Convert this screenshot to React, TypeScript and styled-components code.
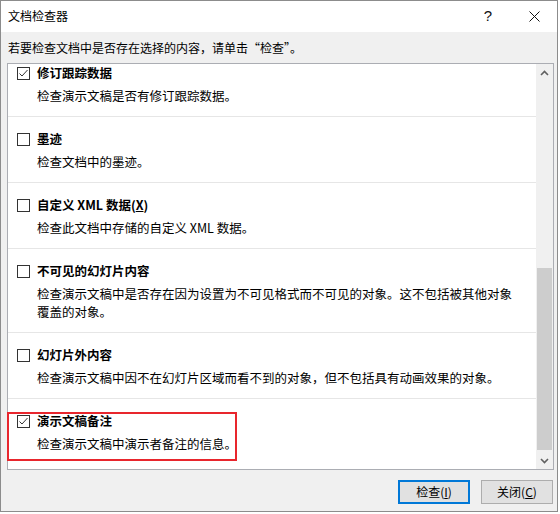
import React from 'react'
import styled, { createGlobalStyle } from 'styled-components'

const GlobalStyle = createGlobalStyle`
  html, body {
    margin: 0;
    padding: 0;
    background: #ffffff;
  }
  body {
    font-family: "Noto Sans CJK SC", "Noto Sans", sans-serif;
    font-size: 12px;
    color: #000;
  }
`

type Item = {
  title: React.ReactNode
  desc: string
  checked?: boolean
  highlighted?: boolean
}

const items: Array<Item> = [
  { title: '修订跟踪数据', desc: '检查演示文稿是否有修订跟踪数据。', checked: true },
  { title: '墨迹', desc: '检查文档中的墨迹。' },
  {
    title: (
      <>
        自定义 XML 数据(<u>X</u>)
      </>
    ),
    desc: '检查此文档中存储的自定义 XML 数据。',
  },
  {
    title: '不可见的幻灯片内容',
    desc: '检查演示文稿中是否存在因为设置为不可见格式而不可见的对象。这不包括被其他对象覆盖的对象。',
  },
  {
    title: '幻灯片外内容',
    desc: '检查演示文稿中因不在幻灯片区域而看不到的对象，但不包括具有动画效果的对象。',
  },
  {
    title: '演示文稿备注',
    desc: '检查演示文稿中演示者备注的信息。',
    checked: true,
    highlighted: true,
  },
]

const CheckBox: React.FunctionComponent<{ checked?: boolean }> = ({ checked }) => (
  <svg width="13" height="13" viewBox="0 0 13 13">
    <rect x="0.5" y="0.5" width="12" height="12" fill="#fff" stroke="#333" />
    {checked && (
      <path d="M2.5 6.5 L5 9 L10.5 3" fill="none" stroke="#333" strokeWidth="1" />
    )}
  </svg>
)

const Chevron: React.FunctionComponent<{ up?: boolean }> = ({ up }) => (
  <svg width="9" height="6" viewBox="0 0 9 6">
    <path
      d={up ? 'M1 5 L4.5 1.5 L8 5' : 'M1 1 L4.5 4.5 L8 1'}
      fill="none"
      stroke="#606060"
      strokeWidth="1.6"
    />
  </svg>
)

export default function App() {
  return (
    <>
      <GlobalStyle />
      <Window>
        <TitleBar>
          <Title>文档检查器</Title>
          <TitleButton>
            <HelpGlyph>?</HelpGlyph>
          </TitleButton>
          <TitleButton>
            <svg width="11" height="11" viewBox="0 0 11 11">
              <path d="M0.5 0.5 L10.5 10.5 M10.5 0.5 L0.5 10.5" stroke="#111" strokeWidth="1" />
            </svg>
          </TitleButton>
        </TitleBar>
        <Body>
          <Instruction>若要检查文档中是否存在选择的内容，请单击“检查”。</Instruction>
          <ListBox>
            <ListViewport>
              <ListContent>
                {items.map((item, i) => (
                  <ListItem key={i} last={i === items.length - 1}>
                    <ItemHeader>
                      <CheckBox checked={item.checked} />
                      <ItemTitle>{item.title}</ItemTitle>
                    </ItemHeader>
                    <ItemDesc>{item.desc}</ItemDesc>
                    {item.highlighted && <Highlight />}
                  </ListItem>
                ))}
              </ListContent>
            </ListViewport>
            <ScrollBar>
              <ScrollArrow>
                <Chevron up />
              </ScrollArrow>
              <ScrollTrack>
                <ScrollThumb />
              </ScrollTrack>
              <ScrollArrow>
                <Chevron />
              </ScrollArrow>
            </ScrollBar>
          </ListBox>
          <Footer>
            <DialogButton primary>
              检查(<u>I</u>)
            </DialogButton>
            <DialogButton>
              关闭(<u>C</u>)
            </DialogButton>
          </Footer>
        </Body>
      </Window>
    </>
  )
}

const Window = styled.div`
  width: 558px;
  height: 512px;
  box-sizing: border-box;
  border: 1px solid #8c8c8c;
  background: #f0f0f0;
  display: flex;
  flex-direction: column;
`

const TitleBar = styled.div`
  height: 31px;
  background: #ffffff;
  display: flex;
  flex-direction: row;
  align-items: center;
  padding-left: 7px;
`

const Title = styled.div`
  flex: 1;
  font-size: 12px;
  line-height: 16px;
  margin-top: -2px;
`

const TitleButton = styled.div`
  width: 46px;
  height: 31px;
  display: flex;
  align-items: center;
  justify-content: center;
`

const HelpGlyph = styled.span`
  font-family: "Liberation Sans", sans-serif;
  font-size: 15px;
  color: #111;
  margin-top: -2px;
`

const Body = styled.div`
  flex: 1;
  display: flex;
  flex-direction: column;
  padding: 0 3px 0 6px;
`

const Instruction = styled.div`
  height: 31px;
  line-height: 31px;
  padding-left: 1px;
  font-size: 12px;
`

const ListBox = styled.div`
  height: 407px;
  box-sizing: border-box;
  border: 1px solid #abadb3;
  background: #ffffff;
  display: flex;
  flex-direction: row;
  position: relative;
`

const ListViewport = styled.div`
  flex: 1;
  overflow-x: visible;
  overflow-y: clip;
`

const ListContent = styled.div`
  margin-top: -13px;
  display: flex;
  flex-direction: column;
`

const ListItem = styled.div<{ last?: boolean }>`
  position: relative;
  padding: 13px 16px 11px 9px;
  border-bottom: ${({ last }) => (last ? 'none' : '1px solid #e6e6e6')};
`

const ItemHeader = styled.div`
  display: flex;
  flex-direction: row;
  align-items: center;
  gap: 7px;
  height: 18px;
`

const ItemTitle = styled.div`
  font-weight: bold;
  font-size: 12.5px;
  line-height: 18px;
`

const ItemDesc = styled.div`
  margin-top: 5px;
  padding-left: 20px;
  font-size: 12.5px;
  line-height: 18px;
`

const Highlight = styled.div`
  position: absolute;
  left: -1px;
  top: 13px;
  width: 230px;
  height: 49px;
  box-sizing: border-box;
  border: 2px solid #e8262d;
  pointer-events: none;
`

const ScrollBar = styled.div`
  width: 17px;
  background: #f0f0f0;
  display: flex;
  flex-direction: column;
`

const ScrollArrow = styled.div`
  height: 17px;
  display: flex;
  align-items: center;
  justify-content: center;
`

const ScrollTrack = styled.div`
  flex: 1;
  display: flex;
  flex-direction: column;
  justify-content: flex-end;
  padding-bottom: 2px;
`

const ScrollThumb = styled.div`
  height: 182px;
  margin: 0 1px;
  background: #cdcdcd;
`

const Footer = styled.div`
  display: flex;
  flex-direction: row;
  justify-content: flex-end;
  gap: 11px;
  padding: 10px 1px 0 0;
`

const DialogButton = styled.div<{ primary?: boolean }>`
  width: 72px;
  height: 24px;
  box-sizing: border-box;
  background: #e1e1e1;
  border: ${({ primary }) => (primary ? '2px solid #0078d7' : '1px solid #adadad')};
  display: flex;
  align-items: center;
  justify-content: center;
  font-size: 12px;
  line-height: 16px;
`
